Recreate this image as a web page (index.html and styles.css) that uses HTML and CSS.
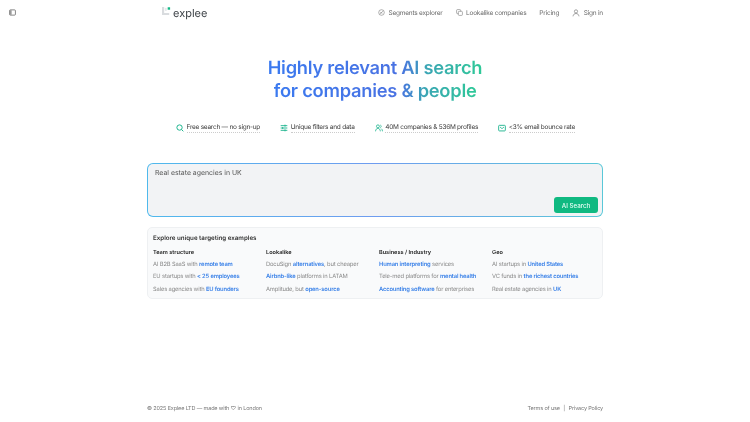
FILE: index.html
```html
<!DOCTYPE html>
<html lang="en">
<head>
<meta charset="utf-8">
<title>Explee</title>
<link rel="stylesheet" href="styles.css">
</head>
<body>
<div class="page">
  <header class="topbar">
    <svg class="panel-icon" viewBox="0 0 12 12" width="7" height="7"><rect x="1" y="1.5" width="10" height="9" rx="1.5" fill="none" stroke="#444" stroke-width="1.1"/><rect x="1.5" y="2" width="3" height="8" fill="#999"/></svg>
    <div class="topbar-inner">
      <div class="logo">
        <svg class="logo-mark" viewBox="0 0 10 10" width="9" height="9"><path d="M0 0h2.4v6.8H8V9H0z" fill="#d9dcdf"/><rect x="3.2" y="1" width="2" height="3.4" fill="#e7e9eb"/><rect x="6.3" y="0.3" width="2.7" height="2.7" fill="#12b886"/></svg>
        <span class="logo-text">explee</span>
      </div>
      <nav class="nav">
        <a class="nav-link"><svg viewBox="0 0 12 12" width="7" height="7"><circle cx="6" cy="6" r="4.8" fill="none" stroke="#777" stroke-width="1"/><path d="M3 8.5 9 3.5M4 5l3 3" stroke="#777" stroke-width="1" fill="none"/></svg>Segments explorer</a>
        <a class="nav-link"><svg viewBox="0 0 12 12" width="7" height="7"><rect x="1" y="1" width="7" height="7" rx="1.5" fill="none" stroke="#777"/><rect x="4" y="4" width="7" height="7" rx="1.5" fill="#fff" stroke="#777"/></svg>Lookalike companies</a>
        <a class="nav-link">Pricing</a>
        <a class="nav-link"><svg viewBox="0 0 12 12" width="8" height="8"><circle cx="6" cy="3.6" r="2.4" fill="none" stroke="#777"/><path d="M1.5 11c.4-3 2.2-4.2 4.5-4.2s4.1 1.2 4.5 4.2" fill="none" stroke="#777"/></svg>Sign in</a>
      </nav>
    </div>
  </header>

  <main class="main">
    <h1 class="headline">
      <span class="headline-line">Highly relevant AI search</span>
      <span class="headline-line">for companies &amp; people</span>
    </h1>

    <ul class="features">
      <li class="feature"><svg viewBox="0 0 12 12" width="8" height="8"><circle cx="5.3" cy="5.3" r="4" fill="none" stroke="#1fb58f" stroke-width="1.5"/><path d="M8.3 8.3 11 11" stroke="#1fb58f" stroke-width="1.5"/></svg><span class="feature-text">Free search — no sign-up</span></li>
      <li class="feature"><svg viewBox="0 0 12 12" width="8" height="8"><path d="M1 2.5h10M1 6h10M1 9.5h10" stroke="#1fb58f" stroke-width="1.4"/><path d="M7.5 1v3M4 4.5v3M7.5 8v3" stroke="#1fb58f" stroke-width="1.4"/></svg><span class="feature-text">Unique filters and data</span></li>
      <li class="feature"><svg viewBox="0 0 12 12" width="8" height="8"><circle cx="4.4" cy="3.5" r="2.2" fill="none" stroke="#1fb58f" stroke-width="1.2"/><path d="M.8 11c.2-3 1.6-4.4 3.6-4.4S7.8 8 8 11M8 1.5a2.2 2.2 0 0 1 0 4M9.3 7c1.2.6 1.8 2 2 4" fill="none" stroke="#1fb58f" stroke-width="1.2"/></svg><span class="feature-text">40M companies &amp; 536M profiles</span></li>
      <li class="feature"><svg viewBox="0 0 12 12" width="8" height="8"><rect x="1" y="2" width="10" height="8.4" rx="1.2" fill="none" stroke="#1fb58f" stroke-width="1.4"/><path d="M3 4.5 6 7l3-2.5" fill="none" stroke="#1fb58f" stroke-width="1.2"/></svg><span class="feature-text">&lt;3% email bounce rate</span></li>
    </ul>

    <form class="search">
      <div class="search-inner">
        <div class="query">Real estate agencies in UK</div>
        <div class="search-actions"><button class="search-button" type="button">AI Search</button></div>
      </div>
    </form>

    <section class="examples">
      <h2 class="examples-title">Explore unique targeting examples</h2>
      <div class="example-grid">
        <div class="example-col">
          <h3 class="col-title">Team structure</h3>
          <p class="example">AI B2B SaaS with <b>remote team</b></p>
          <p class="example">EU startups with <b>&lt; 25 employees</b></p>
          <p class="example">Sales agencies with <b>EU founders</b></p>
        </div>
        <div class="example-col">
          <h3 class="col-title">Lookalike</h3>
          <p class="example">DocuSign <b>alternatives</b>, but cheaper</p>
          <p class="example"><b>Airbnb-like</b> platforms in LATAM</p>
          <p class="example">Amplitude, but <b>open-source</b></p>
        </div>
        <div class="example-col">
          <h3 class="col-title">Business / Industry</h3>
          <p class="example"><b>Human interpreting</b> services</p>
          <p class="example">Tele-med platforms for <b>mental health</b></p>
          <p class="example"><b>Accounting software</b> for enterprises</p>
        </div>
        <div class="example-col">
          <h3 class="col-title">Geo</h3>
          <p class="example">AI startups in <b>United States</b></p>
          <p class="example">VC funds in <b>the richest countries</b></p>
          <p class="example">Real estate agencies in <b>UK</b></p>
        </div>
      </div>
    </section>
  </main>

  <footer class="footer">
    <span>© 2025 Explee LTD — made with ♡ in London</span>
    <span class="footer-links"><a>Terms of use</a><span>|</span><a>Privacy Policy</a></span>
  </footer>
</div>
</body>
</html>
```

FILE: styles.css
```css
* { box-sizing: border-box; }
html, body { margin: 0; padding: 0; height: 100%; }
body {
  background: #fff;
  color: #333;
  font-family: Inter, "Liberation Sans", sans-serif;
  overflow: hidden;
  text-rendering: geometricPrecision;
}
.page { height: 422px; display: flex; flex-direction: column; will-change: transform; }
.topbar { height: 25px; display: flex; align-items: center; padding-left: 9px; position: relative; flex: none; }
.panel-icon { flex: none; }
.topbar-inner { position: absolute; left: 162px; width: 441px; top: 0; height: 25px; display: flex; justify-content: space-between; align-items: center; }
.logo { display: flex; align-items: center; gap: 2px; }
.logo-mark { margin-top: -3px; }
.logo-text { font-size: 11px; color: #3a3f44; }
.nav { display: flex; gap: 13px; align-items: center; }
.nav-link { display: flex; align-items: center; gap: 3.5px; font-size: 6.5px; letter-spacing: -0.22px; color: #6b6b6b; }
.main { flex: 1; width: 456px; margin: 0 auto; display: flex; flex-direction: column; }
.headline { margin: 31.5px 0 0; font-size: 18.3px; line-height: 23.5px; font-weight: 600; letter-spacing: -0.25px; text-align: center; }
.headline-line {
  display: block; width: max-content; margin: 0 auto;
  background: linear-gradient(90deg, #3b7af0 0%, #4a72e2 62%, #3aa5b4 74%, #2fc998 100%);
  -webkit-background-clip: text; background-clip: text; color: transparent;
}
.features { list-style: none; margin: 19px 0 0; padding: 0 28px 0 29px; display: flex; justify-content: space-between; }
.feature { display: flex; align-items: center; gap: 2.5px; font-size: 6.5px; letter-spacing: -0.25px; color: #3c3c3c; }
.feature-text { border-bottom: 1px dotted #ccc; padding-bottom: 1px; }
.search { margin-top: 30px; padding: 1px; border-radius: 6px; background: linear-gradient(90deg, #4fb9ec, #6f9cf0 50%, #5ac8d8); }
.search-inner { height: 52.5px; background: #f2f3f5; border-radius: 5px; padding: 4.5px 4px 3px 7px; display: flex; flex-direction: column; justify-content: space-between; }
.query { font-size: 6.9px; color: #555; }
.search-actions { display: flex; justify-content: flex-end; }
.search-button { width: 44px; height: 16px; padding: 0; border: 0; border-radius: 3px; background: #10b981; color: #e8fff6; font: 500 6.2px Inter, sans-serif; }
.examples { margin-top: 10px; height: 72px; background: #f9fafb; border: 1px solid #eef0f2; border-radius: 5px; padding: 6px 5px; }
.examples-title { margin: 0 0 5.5px; font-size: 6.2px; line-height: 9px; font-weight: 600; color: #333; }
.example-grid { display: grid; grid-template-columns: repeat(4, 113px); }
.col-title { margin: 0 0 4.5px; font-size: 5.6px; line-height: 8px; font-weight: 600; color: #222; }
.example { margin: 0 0 4.4px; font-size: 5.8px; letter-spacing: -0.15px; line-height: 8px; color: #888; white-space: nowrap; }
.example b { font-weight: 600; color: #3b82e8; }
.footer { display: flex; justify-content: space-between; width: 456px; margin: 0 auto 9px; font-size: 5.5px; letter-spacing: -0.14px; line-height: 8px; color: #777; }
.footer-links { display: flex; gap: 3.5px; }
```
